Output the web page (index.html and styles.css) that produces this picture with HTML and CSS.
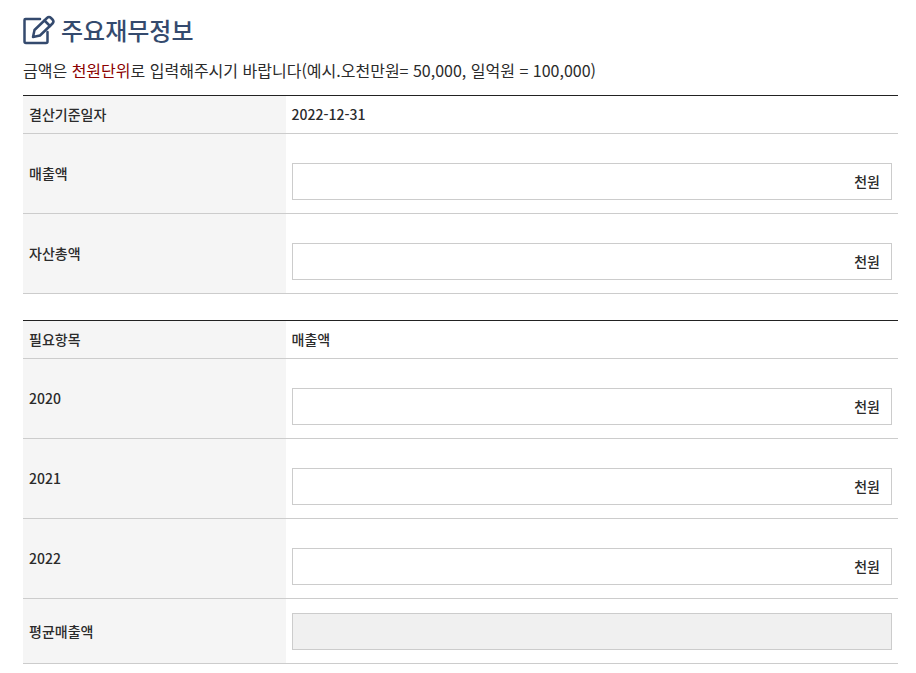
FILE: index.html
```html
<!DOCTYPE html>
<html lang="ko">
<head>
    <meta charset="UTF-8">
    <meta name="viewport" content="width=device-width, initial-scale=1.0">
    <title>주요재무정보</title>
    <link rel="stylesheet" href="styles.css">
</head>
<body>
    <form class="finance">
        <h2 class="title">
            <svg class="title-icon" viewBox="0 0 32 30" aria-hidden="true">
                <path d="M17 4H2.5Q1.5 4 1.5 5V26.500Q1.500 28 3 28H23Q24.500 28 24.500 26.500V17"/>
                <path d="M10 22L11.500 15L24 3Q26 1 28 3L29.500 4.500Q31.500 6.500 29.500 8.500L17 20.500Z"/>
                <path d="M21.500 5.500L27 11"/>
            </svg>
            주요재무정보
        </h2>
        <p class="guide">금액은 <span class="point">천원단위</span>로 입력해주시기 바랍니다(예시.오천만원= 50,000, 일억원 = 100,000)</p>

        <table class="info-table">
            <tr>
                <th scope="row">결산기준일자</th>
                <td>2022-12-31</td>
            </tr>
            <tr>
                <th scope="row"><label for="sales">매출액</label></th>
                <td class="input-cell">
                    <div class="field"><input type="text" id="sales"><span>천원</span></div>
                </td>
            </tr>
            <tr>
                <th scope="row"><label for="assets">자산총액</label></th>
                <td class="input-cell">
                    <div class="field"><input type="text" id="assets"><span>천원</span></div>
                </td>
            </tr>
        </table>

        <table class="info-table">
            <tr>
                <th scope="col">필요항목</th>
                <th scope="col" class="plain">매출액</th>
            </tr>
            <tr>
                <th scope="row"><label for="sales2020">2020</label></th>
                <td class="input-cell">
                    <div class="field"><input type="text" id="sales2020"><span>천원</span></div>
                </td>
            </tr>
            <tr>
                <th scope="row"><label for="sales2021">2021</label></th>
                <td class="input-cell">
                    <div class="field"><input type="text" id="sales2021"><span>천원</span></div>
                </td>
            </tr>
            <tr>
                <th scope="row"><label for="sales2022">2022</label></th>
                <td class="input-cell">
                    <div class="field"><input type="text" id="sales2022"><span>천원</span></div>
                </td>
            </tr>
            <tr>
                <th scope="row"><label for="average">평균매출액</label></th>
                <td class="result-cell">
                    <div class="field readonly"><input type="text" id="average" readonly></div>
                </td>
            </tr>
        </table>
    </form>
</body>
</html>
```

FILE: styles.css
```css
* {
    box-sizing: border-box;
}

body {
    margin: 0;
    background-color: #fff;
    color: #2b2b2b;
    font-family: "Noto Sans CJK KR", sans-serif;
    font-size: 14px;
    font-weight: 500;
    line-height: 20px;
}

.finance {
    padding: 12px 18px 8px 23px;
}

.title {
    display: flex;
    align-items: center;
    gap: 6px;
    margin: 0;
    color: #344a6e;
    font-size: 24px;
    font-weight: 500;
    line-height: 36px;
}

.title-icon {
    width: 32px;
    height: 30px;
    fill: none;
    stroke: #344a6e;
    stroke-width: 2.5;
    stroke-linecap: round;
    stroke-linejoin: round;
}

.guide {
    margin: 10px 0 12px;
    font-size: 16px;
    font-weight: 400;
    line-height: 25px;
}

.point {
    color: #8b0000;
}

/* tables */
.info-table {
    width: 100%;
    margin-bottom: 26px;
    border-top: 1px solid #222;
    border-spacing: 0;
    table-layout: fixed;
}

.info-table:last-child {
    margin-bottom: 0;
}

.info-table th,
.info-table td {
    padding: 8px 6px 9px;
    border-bottom: 1px solid #ccc;
    font-weight: 500;
    text-align: left;
    vertical-align: middle;
}

.info-table th {
    width: 30%;
    background-color: #f5f5f5;
}

.info-table th.plain {
    width: 70%;
    background-color: #fff;
}

.info-table .input-cell {
    padding: 29px 6px 13px;
}

.info-table .result-cell {
    padding: 14px 6px 13px;
}

/* input with its unit on the right */
.field {
    display: flex;
    align-items: center;
    height: 37px;
    padding: 0 11px 2px 0;
    border: 1px solid #ccc;
    background-color: #fff;
}

.field input {
    flex: 1;
    min-width: 0;
    height: 100%;
    padding: 0 10px;
    border: 0;
    outline: 0;
    background: transparent;
    font: inherit;
    text-align: right;
}

.field:focus-within {
    border-color: #344a6e;
}

.field.readonly {
    background-color: #f0f0f0;
}
```
